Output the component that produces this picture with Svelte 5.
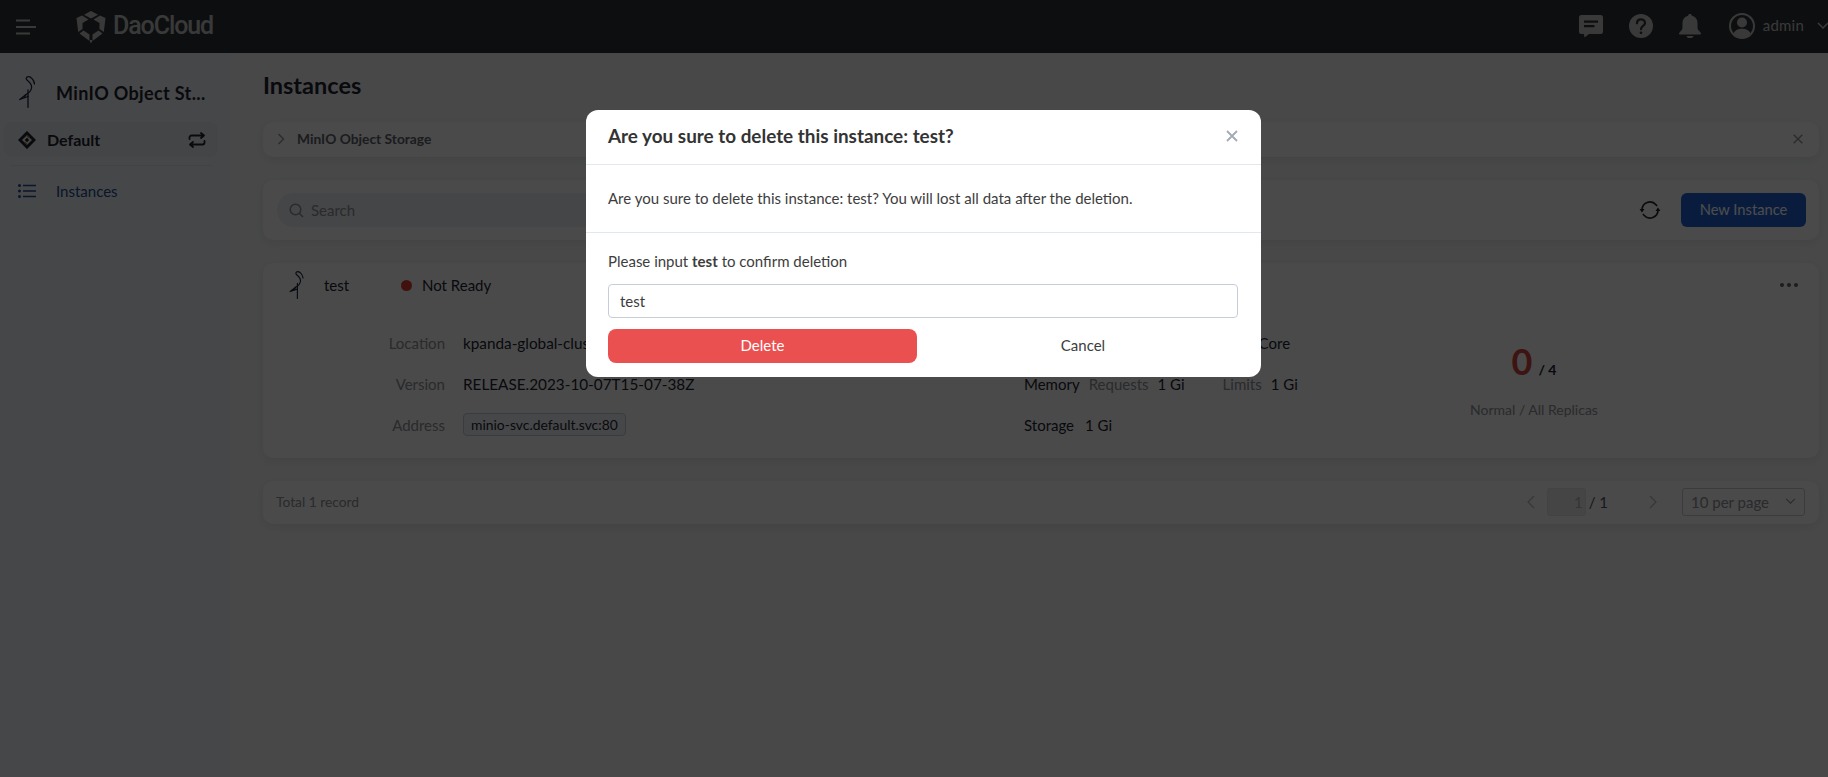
<script>
  const details = [
    { label: 'Location', value: 'kpanda-global-cluster/default' },
    { label: 'Version', value: 'RELEASE.2023-10-07T15-07-38Z' },
    { label: 'Address', value: 'minio-svc.default.svc:80', tag: true }
  ];
</script>

{#snippet stork(cls)}
  <svg class={cls} viewBox="0 0 16 32" fill="none" stroke="#16233a" stroke-width="1.300" stroke-linecap="round" stroke-linejoin="round">
    <path d="M15.500 8 C15 4 12 .7 9.500 .7 C7 .7 6.500 3 8.500 4.500 C11 6.500 13 9 12.500 12 C12 15 10 17 7 18.500 L.8 23.500 L9 20.500" />
    <path d="M7 18.500 L5.500 21.300 M9 14 V31.300" />
  </svg>
{/snippet}

<div class="page">
  <header class="top">
    <svg class="burger" viewBox="0 0 20 16" fill="none" stroke="#c0c0c0" stroke-width="1.800"><path d="M0 1.500H14M0 8H20M0 14.500H14"/></svg>
    <svg class="logo" viewBox="0 0 30 32" fill="#c0c0c0">
      <path d="M15 0 L22 3.700 L15 7.500 L8 3.700 Z"/>
      <path d="M.5 7 L6 4.500 L12.500 8.500 L6.500 12 V18 L2.200 21 Z"/>
      <path d="M29.500 7 L24 4.500 L17.500 8.500 L23.500 12 V18 L27.800 21 Z"/>
      <path d="M3.500 22.500 L7.500 19.500 L13.500 23.500 V30 Z"/>
      <path d="M26.500 22.500 L22.500 19.500 L16.500 23.500 V30 Z"/>
      <path d="M14 31 L15 32 L16 31 V29 H14Z"/>
    </svg>
    <span class="brand">DaoCloud</span>
    <div class="top-actions">
      <svg class="ti chat" viewBox="0 0 24 24"><path fill="#c0c0c0" fill-rule="evenodd" d="M2.500 1h19A2.500 2.500 0 0 1 24 3.500v14a2.500 2.500 0 0 1-2.500 2.500H10l-4.500 3.500L5 20H2.500A2.500 2.500 0 0 1 0 17.500v-14A2.500 2.500 0 0 1 2.500 1zM5 6.500v2.200h14V6.500zM5 11v2.200h10.500V11z"/></svg>
      <svg class="ti help" viewBox="0 0 24 24"><circle cx="12" cy="12" r="12" fill="#c0c0c0"/><path fill="none" stroke="#2e3136" stroke-width="2.200" stroke-linecap="round" d="M8 9.300c0-2.500 1.800-4 4-4s4 1.500 4 3.700c0 3-4 3-4 6.200"/><circle cx="12" cy="18.800" r="1.400" fill="#2e3136"/></svg>
      <svg class="ti bell" viewBox="0 0 24 24"><path fill="#c0c0c0" d="M12 0c1 0 1.800.7 1.900 1.700C17.600 2.600 19.500 5.500 19.500 9v5c0 2 2.500 3.500 3.500 5.200.2.500 0 1.300-.8 1.300H1.800c-.8 0-1-.8-.8-1.300C2 17.500 4.500 16 4.500 14V9c0-3.500 1.900-6.400 5.600-7.300C10.200.7 11 0 12 0zM8.500 22h7c-.5 1.400-2 2.300-3.500 2.300S9 23.400 8.500 22z"/></svg>
      <div class="user">
        <svg class="ti avatar" viewBox="0 0 26 26"><circle cx="13" cy="13" r="12" fill="none" stroke="#c0c0c0" stroke-width="2"/><circle cx="13" cy="9.500" r="5" fill="#c0c0c0"/><path fill="#c0c0c0" d="M4.500 20.500C6 17 9.500 15.800 13 15.800s7 1.200 8.500 4.700C19.500 23 16.500 24.500 13 24.500S6.500 23 4.500 20.500z"/></svg>
        <span class="admin">admin</span>
        <svg class="chev-top" viewBox="0 0 12 8" fill="none" stroke="#c0c0c0" stroke-width="1.500"><path d="M1 1l5 5 5-5"/></svg>
      </div>
    </div>
  </header>

  <div class="body">
    <aside class="side">
      <div class="side-title">
        {@render stork('stork-lg')}
        <span class="side-name">MinIO Object St...</span>
      </div>
      <div class="workspace">
        <svg class="ws-icon" viewBox="0 0 18 18" fill="none"><path stroke="#1d2430" stroke-width="3" d="M9 2L16 9 9 16 2 9Z"/><path stroke="#b07b22" stroke-width="1.400" d="M11.500 7L9 4.500M6.500 11L9 13.500"/><path fill="#1d2430" d="M9 6.800L11.200 9 9 11.200 6.800 9Z"/></svg>
        <span class="ws-name">Default</span>
        <svg class="ws-switch" viewBox="0 0 18 16" fill="none" stroke="#1d2430" stroke-width="1.800" stroke-linecap="round" stroke-linejoin="round"><path d="M1.500 7V5.500A2 2 0 0 1 3.500 3.500H16M13 1l3 2.500L13 6M16.500 9v1.500a2 2 0 0 1-2 2H2M5 10l-3 2.500L5 15"/></svg>
      </div>
      <div class="side-rule"></div>
      <div class="nav-item">
        <svg class="nav-icon" viewBox="0 0 18 14" fill="#214a8f"><circle cx="1.500" cy="1.500" r="1.500"/><circle cx="1.500" cy="7" r="1.500"/><circle cx="1.500" cy="12.500" r="1.500"/><path d="M5 .7h13v1.600H5zM5 6.200h13v1.600H5zM5 11.700h13v1.600H5z"/></svg>
        <span>Instances</span>
      </div>
    </aside>

    <main class="main">
      <h1>Instances</h1>
      <div class="banner card">
        <svg class="banner-chev" viewBox="0 0 8 12" fill="none" stroke="#8b8f95" stroke-width="1.300"><path d="M1.500 1l5 5-5 5"/></svg>
        <span class="banner-text">MinIO Object Storage</span>
        <svg class="banner-x" viewBox="0 0 10 10" fill="none" stroke="#8b8f95" stroke-width="1.400"><path d="M.7.7l8.600 8.600M9.300.7L.7 9.300"/></svg>
      </div>

      <div class="toolbar card">
        <div class="search">
          <svg class="search-icon" viewBox="0 0 15 15" fill="none" stroke="#8b8f95" stroke-width="1.500"><circle cx="6.500" cy="6.500" r="5.300"/><path d="M10.500 10.500L14 14"/></svg>
          <span>Search</span>
        </div>
        <svg class="refresh" viewBox="0 0 20 20" fill="none" stroke="#1d2430" stroke-width="1.700"><path d="M2 10a8 8 0 0 1 14-5.300L17 6M18 10a8 8 0 0 1-14 5.300L3 14"/><path fill="#1d2430" stroke="none" d="M-.5 9h5l-2.500 3.500zM15.500 11h5l-2.500-3.500z"/></svg>
        <button class="new">New Instance</button>
      </div>

      <section class="inst card">
        <div class="inst-head">
          {@render stork('stork-sm')}
          <span class="inst-name">test</span>
          <span class="dot"></span>
          <span class="status">Not Ready</span>
          <span class="more"><i></i><i></i><i></i></span>
        </div>
        <div class="inst-body">
          <div class="details">
            {#each details as d}
              <span class="d-label">{d.label}</span>
              <span class="d-value" class:tag={d.tag}>{d.value}</span>
            {/each}
          </div>
          <div class="resources">
            <div class="res-row cpu"><b>CPU</b><span class="mute">Requests</span><b>1 Core</b><span class="mute lim">Limits</span><b>1 Core</b></div>
            <div class="res-row"><b>Memory</b><span class="mute">Requests</span><b>1 Gi</b><span class="mute lim">Limits</span><b>1 Gi</b></div>
            <div class="res-row storage"><b>Storage</b><b>1 Gi</b></div>
          </div>
          <div class="replicas">
            <div class="rep-num"><span class="zero">0</span><span class="of">/ 4</span></div>
            <div class="rep-cap">Normal / All Replicas</div>
          </div>
        </div>
      </section>

      <div class="pager card">
        <span class="total">Total 1 record</span>
        <svg class="pg-chev first" viewBox="0 0 8 14" fill="none" stroke="#b4b7bb" stroke-width="1.200"><path d="M7 1L1 7l6 6"/></svg>
        <span class="pg-input">1</span>
        <span class="pg-of">/ 1</span>
        <svg class="pg-chev next" viewBox="0 0 8 14" fill="none" stroke="#b4b7bb" stroke-width="1.200"><path d="M1 1l6 6-6 6"/></svg>
        <div class="pg-select">
          <span>10 per page</span>
          <svg viewBox="0 0 12 8" fill="none" stroke="#8b8f95" stroke-width="1.300"><path d="M1 1l5 5 5-5"/></svg>
        </div>
      </div>
    </main>
  </div>

  <div class="overlay">
    <div class="modal">
      <div class="m-head">
        <h2>Are you sure to delete this instance: test?</h2>
        <svg class="m-x" viewBox="0 0 12 12" fill="none" stroke="#a3aab5" stroke-width="1.800"><path d="M1 1l10 10M11 1L1 11"/></svg>
      </div>
      <div class="m-msg">Are you sure to delete this instance: test? You will lost all data after the deletion.</div>
      <div class="m-form">
        <div class="m-label">Please input <b>test</b> to confirm deletion</div>
        <div class="m-input">test</div>
        <div class="m-btns">
          <button class="del">Delete</button>
          <button class="cancel">Cancel</button>
        </div>
      </div>
    </div>
  </div>
</div>

<style>
  :global(body) { margin: 0; background: #f0f1f2; }
  .page {
    position: relative;
    width: 1828px;
    height: 777px;
    overflow: hidden;
    font-family: Lato, "Liberation Sans", sans-serif;
    font-size: 15px;
    color: #1d2430;
  }
  svg { display: block; flex: none; }

  .top {
    height: 53px;
    background: #2e3136;
    display: flex;
    align-items: center;
    padding-left: 16px;
    box-sizing: border-box;
  }
  .burger { width: 20px; height: 16px; }
  .logo { width: 30px; height: 32px; margin-left: 40px; }
  .brand { margin-left: 7px; font-size: 25px; font-weight: 500; color: #c0c0c0; font-family: Roboto, sans-serif; letter-spacing: -1.100px; position: relative; top: -1px; }
  .top-actions { margin-left: auto; display: flex; align-items: center; position: relative; top: -1px; }
  .ti { width: 24px; height: 24px; }
  .chat { margin-right: 26px; }
  .help { margin-right: 25px; }
  .bell { margin-right: 27px; }
  .user { display: flex; align-items: center; }
  .avatar { width: 26px; height: 26px; margin-right: 8px; }
  .admin { font-size: 15px; color: #c0c0c0; letter-spacing: .2px; position: relative; top: -1px; }
  .chev-top { width: 12px; height: 8px; margin-left: 13px; margin-right: -1px; }

  .body { display: flex; height: 724px; }
  .side { width: 230px; flex: none; background: #eceef1; box-shadow: 1px 0 4px rgba(0,0,0,.04); box-sizing: border-box; padding-top: 23px; }
  .side-title { display: flex; align-items: center; padding-left: 19px; height: 32px; }
  .stork-lg { width: 16px; height: 32px; }
  .stork-sm { width: 15px; height: 28px; }
  .side-name { margin-left: 21px; font-size: 18px; font-weight: 700; letter-spacing: .35px; white-space: nowrap; position: relative; top: 1px; }
  .workspace {
    margin: 14px 12px 0 4px;
    height: 35px;
    background: #e4e6ea;
    border-radius: 8px;
    display: flex;
    align-items: center;
    padding: 0 12px 0 14px;
  }
  .ws-icon { width: 18px; height: 18px; }
  .ws-name { margin-left: 11px; font-size: 16px; font-weight: 700; }
  .ws-switch { width: 18px; height: 16px; margin-left: auto; }
  .side-rule { height: 1px; background: #dcdfe3; margin: 8px 18px 0 10px; }
  .nav-item { display: flex; align-items: center; height: 50px; padding-left: 18px; color: #214a8f; font-size: 15px; }
  .nav-item span { margin-left: 20px; }
  .nav-icon { width: 18px; height: 14px; }

  .main { flex: 1; min-width: 0; padding: 17px 9px 0 33px; background: #f0f1f2; }
  h1 { margin: 0; font-size: 23.500px; line-height: 30px; font-weight: 700; color: #1d2430; }
  .card { background: #f7f7f8; border-radius: 10px; box-shadow: 0 3px 8px rgba(30,40,60,.08); box-sizing: border-box; }

  .banner { margin-top: 22px; height: 35px; display: flex; align-items: center; padding: 0 16px 2px 14px; }
  .banner-chev { width: 8px; height: 12px; }
  .banner-text { margin-left: 12px; font-size: 13.800px; font-weight: 700; color: #5b6068; }
  .banner-x { width: 10px; height: 10px; margin-left: auto; }

  .toolbar { margin-top: 23px; height: 60px; display: flex; align-items: center; padding: 0 13px 0 14px; }
  .search { width: 700px; height: 34px; background: #e8eaed; border-radius: 17px; display: flex; align-items: center; padding-left: 12px; box-sizing: border-box; color: #8b8f95; font-size: 15px; }
  .search-icon { width: 15px; height: 15px; margin-right: 7px; }
  .refresh { width: 20px; height: 20px; margin-left: auto; overflow: visible; }
  .new { margin-left: 21px; width: 125px; height: 34px; border: 0; border-radius: 6px; background: #1f5fd0; color: #fff; font-size: 14.700px; padding-bottom: 4px; }

  .inst { margin-top: 23px; height: 195px; position: relative; }
  .inst-head { display: flex; align-items: center; height: 44px; padding: 0 21px 0 26px; box-sizing: border-box; }
  .inst-name { margin-left: 20px; width: 77px; }
  .dot { width: 11px; height: 11px; border-radius: 50%; background: #d93a35; }
  .status { margin-left: 10px; font-size: 15px; }
  .more { margin-left: auto; display: flex; gap: 3px; }
  .more i { width: 4px; height: 4px; border-radius: 50%; background: #5b6068; }
  .inst-body { display: flex; padding-top: 15px; }
  .details {
    width: 761px;
    display: grid;
    grid-template-columns: 182px auto;
    grid-auto-rows: 41px;
    column-gap: 18px;
    align-items: center;
    align-content: start;
    justify-items: start;
  }
  .d-label { justify-self: end; color: #8b8f95; }
  .d-value { white-space: nowrap; font-size: 15.300px; }
  .d-value.tag { font-size: 13.900px; border: 1px solid #c4c7cc; background: #eceef1; border-radius: 4px; padding: 2px 7px; }
  .resources { width: 390px; }
  .res-row { display: flex; height: 41px; align-items: center; }
  .res-row b { font-weight: 400; white-space: nowrap; }
  .res-row .mute { color: #8b8f95; margin: 0 9px; }
  .res-row .lim { margin-left: 38px; }
  .res-row.cpu .lim { margin-left: 22px; }
  .res-row b + b { margin-left: 9px; }
  .res-row.storage b + b { margin-left: 11px; }
  .replicas { width: 240px; display: flex; flex-direction: column; align-items: center; }
  .rep-num { display: flex; align-items: baseline; height: 52px; margin-top: 17px; }
  .zero { font-size: 36px; font-weight: 700; color: #d0453c; }
  .of { margin-left: 6px; font-size: 14px; font-weight: 700; }
  .rep-cap { color: #8b8f95; font-size: 14px; margin-top: 10px; }

  .pager { margin-top: 23px; height: 43px; display: flex; align-items: center; padding: 0 14px 2px 13px; }
  .total { font-size: 13.800px; color: #8b8f95; }
  .pg-chev { width: 8px; height: 14px; }
  .first { margin-left: auto; }
  .pg-input { margin-left: 12px; width: 39px; height: 28px; background: #e6e8eb; border: 1px solid #dcdfe3; border-radius: 3px; box-sizing: border-box; color: #aeb1b5; display: flex; align-items: center; justify-content: flex-end; padding-right: 2px; }
  .pg-of { margin-left: 3px; color: #4c515a; }
  .next { margin-left: 41px; }
  .pg-select { margin-left: 25px; width: 123px; height: 28px; border: 1px solid #c4c7cc; border-radius: 3px; box-sizing: border-box; display: flex; align-items: center; justify-content: space-between; padding: 0 8px; color: #8b8f95; font-size: 15px; }
  .pg-select svg { width: 11px; height: 7px; }

  .overlay { position: absolute; inset: 0; background: rgba(0,0,0,.7); padding: 110px 0 0 586px; box-sizing: border-box; }
  .modal { width: 675px; height: 267px; background: #fff; border-radius: 12px; overflow: hidden; color: #3d3d3d; }
  .m-head { height: 55px; border-bottom: 1px solid #e3e7ee; box-sizing: border-box; display: flex; align-items: center; justify-content: space-between; padding: 0 23px 4px 22px; }
  h2 { margin: 0; font-size: 18.900px; font-weight: 700; color: #333; }
  .m-x { width: 12px; height: 12px; position: relative; top: 1px; }
  .m-msg { height: 68px; border-bottom: 1px solid #e3e7ee; box-sizing: border-box; display: flex; align-items: center; padding: 0 22px 2px; }
  .m-form { padding: 0 23px 0 22px; }
  .m-label { margin-top: 18px; line-height: 20px; }
  .m-input { margin-top: 13px; height: 34px; border: 1px solid #c7cdd8; border-radius: 4px; box-sizing: border-box; display: flex; align-items: center; padding: 0 11px; }
  .m-btns { margin-top: 11px; display: flex; height: 34px; }
  button { font-family: inherit; font-size: 15px; }
  .del { width: 309px; border: 0; border-radius: 8px; background: #eb5050; color: #fff; padding-bottom: 3px; }
  .cancel { flex: 1; border: 0; background: none; color: #3d3d3d; margin-left: 11px; padding-bottom: 3px; }
</style>
